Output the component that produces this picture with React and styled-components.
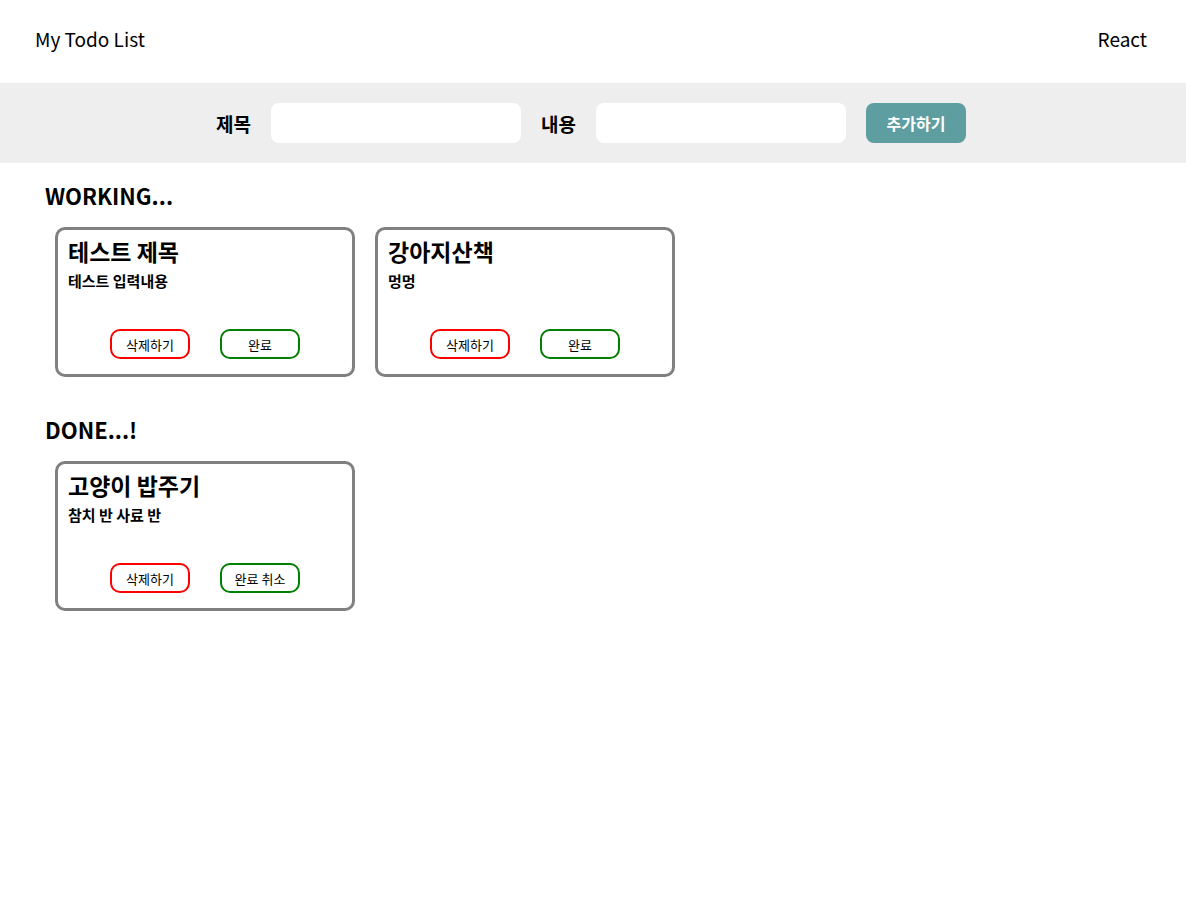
import React, { useState } from 'react';
import styled, { createGlobalStyle } from 'styled-components';

const GlobalStyle = createGlobalStyle`
  body {
    margin: 0;
    font-family: "Noto Sans CJK KR", "Noto Sans", sans-serif;
    background: #fff;
    color: #000;
  }
`;

const initialTodos = [
  { id: 1, title: '테스트 제목', body: '테스트 입력내용', isDone: false },
  { id: 2, title: '강아지산책', body: '멍멍', isDone: false },
  { id: 3, title: '고양이 밥주기', body: '참치 반 사료 반', isDone: true },
];

function App() {
  const [todos, setTodos] = useState(initialTodos);
  const [title, setTitle] = useState('');
  const [body, setBody] = useState('');

  const addTodo = () => {
    if (!title) return;
    setTodos([...todos, { id: Date.now(), title, body, isDone: false }]);
    setTitle('');
    setBody('');
  };

  const removeTodo = (id) => setTodos(todos.filter((t) => t.id !== id));
  const toggleTodo = (id) =>
    setTodos(todos.map((t) => (t.id === id ? { ...t, isDone: !t.isDone } : t)));

  const renderList = (done) =>
    todos
      .filter((t) => t.isDone === done)
      .map((t) => (
        <Card key={t.id}>
          <CardTitle>{t.title}</CardTitle>
          <CardBody>{t.body}</CardBody>
          <ButtonRow>
            <ActionButton $color="red" onClick={() => removeTodo(t.id)}>
              삭제하기
            </ActionButton>
            <ActionButton $color="green" onClick={() => toggleTodo(t.id)}>
              {done ? '완료 취소' : '완료'}
            </ActionButton>
          </ButtonRow>
        </Card>
      ));

  return (
    <>
      <GlobalStyle />
      <Header>
        <span>My Todo List</span>
        <span>React</span>
      </Header>
      <FormBar>
        <Label>제목</Label>
        <Input value={title} onChange={(e) => setTitle(e.target.value)} />
        <Label>내용</Label>
        <Input value={body} onChange={(e) => setBody(e.target.value)} />
        <AddButton onClick={addTodo}>추가하기</AddButton>
      </FormBar>
      <Section>
        <SectionTitle>WORKING...</SectionTitle>
        <CardList>{renderList(false)}</CardList>
      </Section>
      <Section>
        <SectionTitle>DONE...!</SectionTitle>
        <CardList>{renderList(true)}</CardList>
      </Section>
    </>
  );
}

const Header = styled.header`
  height: 83px;
  padding: 0 39px 6px 35px;
  box-sizing: border-box;
  display: flex;
  align-items: center;
  justify-content: space-between;
  font-size: 19px;
`;

const FormBar = styled.div`
  height: 80px;
  background: #eee;
  display: flex;
  align-items: center;
  justify-content: center;
  gap: 20px;
  padding-right: 4px;
`;

const Label = styled.label`
  font-size: 19px;
  font-weight: bold;
`;

const Input = styled.input`
  width: 250px;
  height: 40px;
  box-sizing: border-box;
  border: none;
  border-radius: 8px;
  background: #fff;
  padding: 0 10px;
  outline: none;
`;

const AddButton = styled.button`
  width: 100px;
  height: 40px;
  border: none;
  border-radius: 8px;
  background: cadetblue;
  color: #fff;
  font-family: inherit;
  font-size: 16px;
  font-weight: bold;
  cursor: pointer;
`;

const Section = styled.section`
  padding: 16px 45px 0;
`;

const SectionTitle = styled.h2`
  margin: 0 0 16px;
  font-size: 22px;
  font-weight: bold;
`;

const CardList = styled.div`
  display: flex;
  flex-wrap: wrap;
  gap: 20px;
  padding: 0 10px 20px;
`;

const Card = styled.div`
  width: 300px;
  height: 150px;
  box-sizing: border-box;
  border: 3px solid gray;
  border-radius: 10px;
  padding: 4px 10px 15px;
  display: flex;
  flex-direction: column;
`;

const CardTitle = styled.h3`
  margin: 0;
  font-size: 23px;
  font-weight: bold;
`;

const CardBody = styled.p`
  margin: 2px 0 0;
  font-size: 15px;
  font-weight: bold;
`;

const ButtonRow = styled.div`
  margin-top: auto;
  display: flex;
  justify-content: center;
  gap: 30px;
`;

const ActionButton = styled.button`
  width: 80px;
  height: 30px;
  background: #fff;
  border: 2px solid ${(p) => p.$color};
  border-radius: 10px;
  font-family: inherit;
  font-size: 13px;
  cursor: pointer;
`;

export default App;
